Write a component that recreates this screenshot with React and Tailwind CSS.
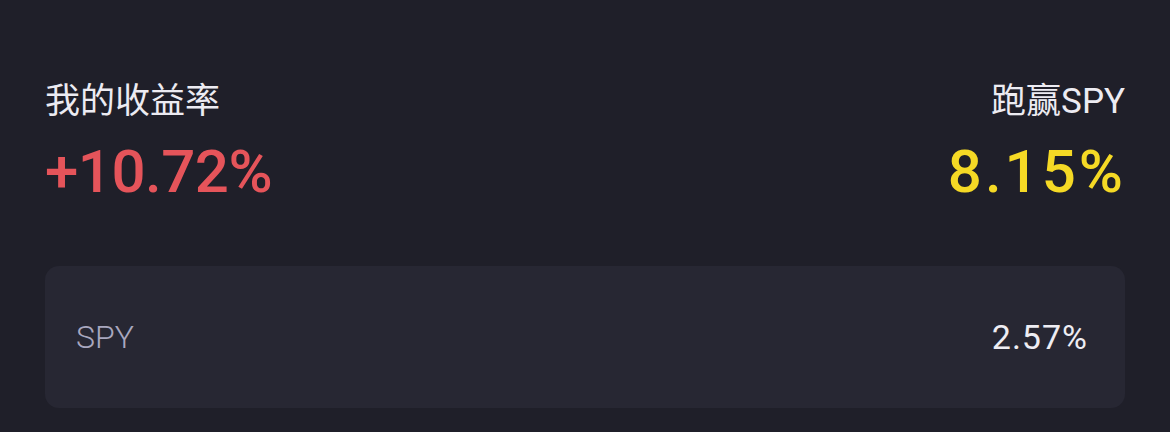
import React from "react";

const font = { fontFamily: "Roboto, 'Noto Sans CJK SC', sans-serif" };

function App() {
  return (
    <div className="w-[1170px] h-[432px] bg-[#1f1f29] px-[45px] pt-[80px]" style={font}>
      {/* headline */}
      <div className="flex justify-between items-start">
        <div className="flex flex-col">
          <div className="text-[35px] leading-[44px] text-[#ecebf2]">我的收益率</div>
          <div className="text-[60px] leading-[70px] mt-[13px] font-medium tracking-[-0.5px] text-[#e5545a]">+10.72%</div>
        </div>
        <div className="flex flex-col items-end">
          <div className="text-[35px] leading-[44px] text-[#ecebf2]">跑赢SPY</div>
          <div className="text-[60px] leading-[70px] mt-[13px] font-medium tracking-[3px] -mr-[1px] text-[#f5d925]">8.15%</div>
        </div>
      </div>

      {/* benchmark card */}
      <div className="mt-[59px] h-[142px] rounded-[14px] bg-[#272733] flex items-center justify-between px-[31px]">
        <span className="text-[32px] text-[#a9a7bf] font-light">SPY</span>
        <span className="text-[34px] text-[#eeedf3] tracking-[1px] pr-[6px]">2.57%</span>
      </div>
    </div>
  );
}

export default App;
